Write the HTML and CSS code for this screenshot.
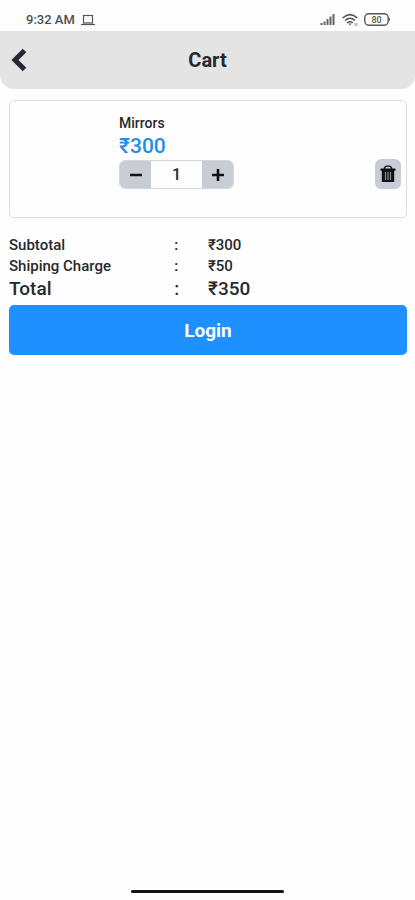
FILE: index.html
```html
<!DOCTYPE html>
<html lang="en">
<head>
<meta charset="utf-8">
<meta name="viewport" content="width=device-width, initial-scale=1">
<title>Cart</title>
<link rel="stylesheet" href="styles.css">
</head>
<body>
<div class="status">
  <time>9:32 AM</time>
  <svg class="laptop" width="14" height="12" viewBox="0 0 14 12" fill="none" stroke="#555" stroke-width="1.2"><rect x="2.500" y="1.500" width="9" height="7.500"/><path d="M0 10.500h14"/></svg>
  <svg class="signal" width="16" height="12" viewBox="0 0 16 12" stroke="#666" stroke-width="2"><path d="M1.500 11v-2M4.500 11V7.500M7.500 11V5M10.500 11V2.500M13.500 11V0"/></svg>
  <svg width="16" height="14" viewBox="0 0 16 14" fill="none" stroke="#555" stroke-width="1.600"><path d="M.7 5Q8-1.800 15.300 5M3 7.500Q8 3 13 7.500M5.200 10Q8 7.500 10.800 10"/><path d="M6.500 10.500h3L8 12.500z" fill="#555" stroke="none"/><path d="M13 10v3M14.800 10v3" stroke="#999" stroke-width="1"/></svg>
  <svg width="27" height="13" viewBox="0 0 27 13"><rect x=".8" y=".8" width="23.400" height="11.400" rx="4" fill="none" stroke="#555" stroke-width="1.400"/><path d="M25 4.500q2 2 0 4z" fill="#555"/><text class="charge" x="12.500" y="9.500" text-anchor="middle">80</text></svg>
</div>
<header class="header">
  <button class="back" type="button" aria-label="Back"><svg width="16" height="24" viewBox="0 0 16 24" fill="none" stroke="#252733" stroke-width="5"><path d="M13.500 2.500 4 12l9.500 9.500"/></svg></button>
  <h1>Cart</h1>
</header>
<main>
  <article class="item">
    <div class="details">
      <h2>Mirrors</h2>
      <p class="price">₹300</p>
      <div class="stepper">
        <button type="button" aria-label="Decrease quantity"><svg width="12" height="12" viewBox="0 0 12 12"><path d="M0 6h12" stroke="#111" stroke-width="2.600"/></svg></button>
        <input type="text" inputmode="numeric" value="1" aria-label="Quantity">
        <button type="button" aria-label="Increase quantity"><svg width="12" height="12" viewBox="0 0 12 12"><path d="M0 6h12M6 0v12" stroke="#111" stroke-width="2.600"/></svg></button>
      </div>
    </div>
    <button class="remove" type="button" aria-label="Remove Mirrors"><svg width="16" height="18" viewBox="0 0 16 18"><path d="M4.500 4V3Q5 1 8 1t3.500 2V4" fill="none" stroke="#222" stroke-width="1.500"/><path d="M.5 3.500h15v2.200h-1.300V17H1.800V5.700H.5z" fill="#111"/><path d="M5.500 7v8M8 7v8M10.500 7v8" stroke="#8c8f94" stroke-width="1.200"/></svg></button>
  </article>
  <table class="summary">
    <tbody>
      <tr><th scope="row">Subtotal</th><td class="colon">:</td><td>₹300</td></tr>
      <tr><th scope="row">Shiping Charge</th><td class="colon">:</td><td>₹50</td></tr>
      <tr class="total"><th scope="row">Total</th><td class="colon">:</td><td>₹350</td></tr>
    </tbody>
  </table>
  <button class="login" type="button">Login</button>
</main>
<div class="home-bar"></div>
</body>
</html>
```
FILE: styles.css
```css
* { box-sizing: border-box; }

body {
  margin: 0;
  min-height: 100vh;
  display: flex;
  flex-direction: column;
  background: #fefefe;
  color: #27292d;
  font-family: Roboto, "Liberation Sans", sans-serif;
  font-weight: 500;
}

h1, h2, p { margin: 0; }

button, input {
  border: 0;
  padding: 0;
  font: inherit;
  color: inherit;
}

button {
  display: flex;
  align-items: center;
  justify-content: center;
  cursor: pointer;
}

.status {
  display: flex;
  align-items: center;
  gap: 6px;
  height: 31px;
  padding: 8px 24px 0 26px;
  font-size: 13px;
  color: #505050;
}

.signal { margin-left: auto; }

.charge {
  font-size: 9px;
  fill: #555;
}

.header {
  display: grid;
  grid-template-columns: 38px 1fr 38px;
  align-items: center;
  height: 58px;
  background: #e4e4e4;
  border-radius: 0 0 14px 14px;
}

.header h1 {
  font-size: 20px;
  font-weight: 700;
  text-align: center;
}

.back {
  height: 44px;
  background: none;
}

main {
  flex: 1;
  padding: 11px 8px 0 9px;
}

.item {
  display: flex;
  align-items: center;
  justify-content: space-between;
  min-height: 118px;
  padding: 12px 5px 28px 109px;
  border: 1px solid #dedede;
  border-radius: 5px;
}

.item h2 {
  font-size: 14px;
  line-height: 20px;
  font-weight: 500;
}

.price {
  font-size: 21px;
  line-height: 27px;
  color: #1e8fee;
}

.stepper {
  display: flex;
  width: 115px;
  height: 29px;
  overflow: hidden;
  border: 1px solid #d3d7dd;
  border-radius: 6px;
}

.stepper button {
  width: 31px;
  background: #c8ccd5;
}

.stepper input {
  flex: 1;
  min-width: 0;
  background: #fefefe;
  font-size: 16px;
  text-align: center;
}

.remove {
  align-self: flex-end;
  width: 26px;
  height: 30px;
  border-radius: 6px;
  background: #c8ccd5;
}

.summary {
  width: 100%;
  margin-top: 17px;
  border-collapse: collapse;
  table-layout: fixed;
  font-size: 15px;
  line-height: 21px;
}

.summary th {
  width: 41%;
  padding: 0;
  font-weight: 500;
  text-align: left;
}

.summary td { padding: 0; }

.summary .colon {
  width: 9%;
  padding-left: 2px;
}

.summary .total {
  font-size: 19px;
  line-height: 24px;
}

.login {
  width: 100%;
  height: 50px;
  margin-top: 4px;
  border-radius: 5px;
  background: #1e90ff;
  color: #fff;
  font-size: 19px;
  font-weight: 700;
}

.home-bar {
  width: 37%;
  height: 3px;
  margin: 0 auto 7px;
  border-radius: 2px;
  background: #151515;
}
```
